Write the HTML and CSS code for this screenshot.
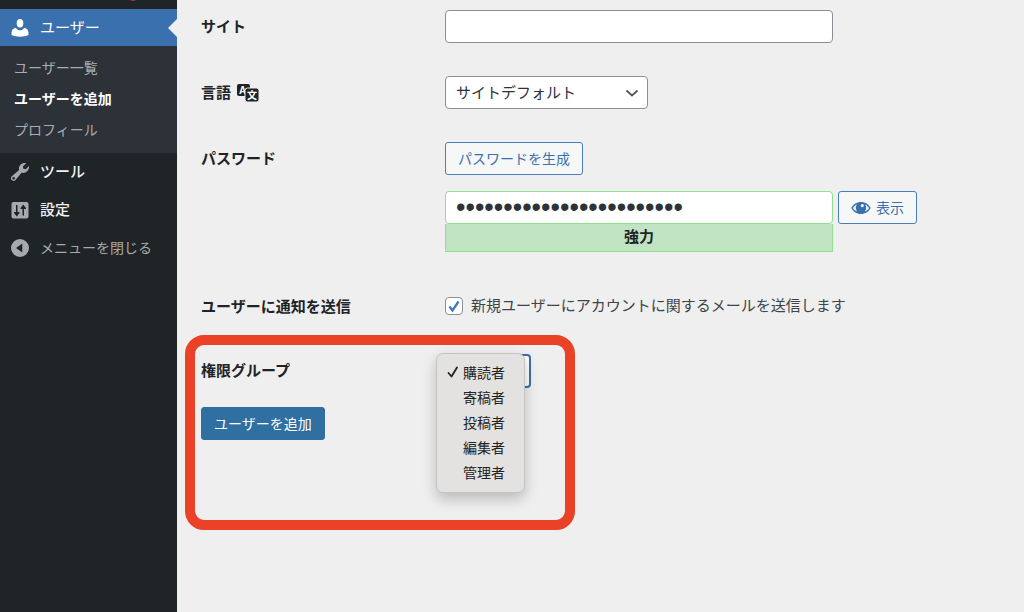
FILE: index.html
```html
<!DOCTYPE html>
<html lang="ja">
<head>
    <meta charset="UTF-8">
    <meta name="viewport" content="width=device-width, initial-scale=1.0">
    <title>ユーザーを追加</title>
    <link rel="stylesheet" href="styles.css">
</head>
<body>

<!-- Admin menu -->
<nav class="sidebar">
    <div class="menu-top"><span class="update-badge"></span></div>
    <a href="#" class="menu-item current">
        <svg class="icon" viewBox="0 0 20 20"><ellipse cx="10" cy="5.2" rx="3.300" ry="4.200"/><path d="M5.800 9.700c.9 1.700 2.400 2.600 4.200 2.600s3.300-.9 4.200-2.600c2.800.6 4.300 2.400 4.300 5.200v2.200c-2.400 1.200-5.200 1.700-8.500 1.700s-6.100-.5-8.500-1.700v-2.200c0-2.800 1.500-4.600 4.300-5.200z"/></svg>
        ユーザー
    </a>
    <ul class="submenu">
        <li><a href="#">ユーザー一覧</a></li>
        <li><a href="#" class="active">ユーザーを追加</a></li>
        <li><a href="#">プロフィール</a></li>
    </ul>
    <a href="#" class="menu-item">
        <svg class="icon" viewBox="0 0 20 20"><path fill-rule="evenodd" d="M17 9.300c-1.500 1.500-3.500 2-5.200 1.300l-6.300 7.400c-1.100 1.200-2.700 1.200-3.800.1s-1.100-2.700.1-3.800l7.400-6.300c-.7-1.800-.2-3.900 1.200-5.300C12.100 1 14.300.5 16.200 1.200L12.900 4.500l.5 2.300 2.300.5 3.300-3.300c.6 1.900-.6 3.900-2 5.300zM3.600 15a1.300 1.300 0 1 0 0 2.600 1.300 1.300 0 0 0 0-2.600z"/></svg>
        ツール
    </a>
    <a href="#" class="menu-item">
        <svg class="icon" viewBox="0 0 20 20"><path fill-rule="evenodd" d="M3.500 2h13q2 0 2 2v12.500q0 2-2 2h-13q-2 0-2-2V4q0-2 2-2zM6 5v7H4v1l2.800 3.500L9.500 13v-1h-2V5zM13.200 4.500 10.500 8v1h2v6.500H14V9h2V8z"/></svg>
        設定
    </a>
    <button type="button" class="menu-item collapse">
        <svg class="icon" viewBox="0 0 20 20"><path fill-rule="evenodd" d="M10 1a9 9 0 1 0 0 18A9 9 0 0 0 10 1zM12.300 5.500v9L6 10z"/></svg>
        メニューを閉じる
    </button>
</nav>

<main class="content">
    <form class="user-form">
        <div class="row">
            <label class="title" for="url">サイト</label>
            <input type="text" id="url" class="field wide">
        </div>

        <div class="row">
            <label class="title" for="locale">言語
                <svg class="translate" viewBox="0 0 23 20">
                    <rect x="1" y="1" width="13" height="12" rx="2"/>
                    <text x="3" y="11">A</text>
                    <rect class="front" x="9" y="5" width="14" height="14" rx="2.500"/>
                    <text x="11" y="16">文</text>
                </svg>
            </label>
            <select id="locale" class="field locale">
                <option>サイトデフォルト</option>
            </select>
        </div>

        <div class="row">
            <label class="title" for="pass">パスワード</label>
            <div class="password">
                <button type="button" class="button">パスワードを生成</button>
                <div class="password-line">
                    <div class="password-box">
                        <input type="password" id="pass" class="field strong" value="abcdefghijklmnopqrstuvwx">
                        <div class="strength">強力</div>
                    </div>
                    <button type="button" class="button">
                        <svg class="eye" viewBox="0 0 20 14"><path fill-rule="evenodd" d="M10 1C5.800 1 2.300 3.200.3 7c2 3.800 5.500 6 9.700 6s7.700-2.200 9.700-6C17.700 3.200 14.200 1 10 1zM6 3.500a5 5 0 0 0 .4 7C4.500 9.900 3 8.700 1.900 7 2.900 5.400 4.300 4.200 6 3.500zm8 0c1.700.7 3.100 1.900 4.100 3.500-1.100 1.700-2.600 2.900-4.500 3.500a5 5 0 0 0 .4-7zM11.300 3a1.600 1.600 0 1 1 0 3.200 1.600 1.600 0 0 1 0-3.200z"/></svg>
                        表示
                    </button>
                </div>
            </div>
        </div>

        <div class="row notify">
            <span class="title">ユーザーに通知を送信</span>
            <label class="check"><input type="checkbox" checked>新規ユーザーにアカウントに関するメールを送信します</label>
        </div>

        <!-- Role picker with its open menu -->
        <div class="role-area">
            <div class="row">
                <label class="title" for="role">権限グループ</label>
                <div class="role-box">
                    <select id="role" class="field role">
                        <option>購読者</option>
                    </select>
                    <ul class="role-menu">
                        <li class="selected">購読者</li>
                        <li>寄稿者</li>
                        <li>投稿者</li>
                        <li>編集者</li>
                        <li>管理者</li>
                    </ul>
                </div>
            </div>
            <button type="submit" class="button primary">ユーザーを追加</button>
            <div class="highlight"></div>
        </div>
    </form>
</main>

</body>
</html>
```
FILE: styles.css
```css
* {
    box-sizing: border-box;
}

body {
    display: flex;
    min-height: 100vh;
    margin: 0;
    background-color: #efefef;
    color: #3c434a;
    font-family: "Liberation Sans", "Noto Sans CJK JP", sans-serif;
    font-size: 15px;
    line-height: 24px;
}

button, input, select {
    font: inherit;
}

ul {
    list-style: none;
    margin: 0;
    padding: 0;
}

/* Sidebar */
.sidebar {
    flex: 0 0 177px;
    background-color: #1f2427;
}

.menu-top {
    display: flex;
    justify-content: center;
    align-items: flex-end;
    height: 9px;
    padding: 0 0 8px 88px;
}

.update-badge {
    flex: none;
    width: 8px;
    height: 8px;
    border-radius: 50%;
    background-color: #b03238;
}

.menu-item {
    display: flex;
    align-items: center;
    gap: 10px;
    width: 100%;
    height: 38px;
    padding: 0 10px;
    border: none;
    background: none;
    color: #f0f0f1;
    font-weight: 500;
    text-decoration: none;
}

.icon {
    width: 20px;
    height: 20px;
    fill: #a7aaad;
}

.menu-item.current {
    position: relative;
    height: 37px;
    background-color: #3a70ae;
    color: #fff;
    font-weight: 400;
}

.menu-item.current::after {
    content: "";
    position: absolute;
    top: 10px;
    right: 0;
    border: 9px solid transparent;
    border-left: none;
    border-right-color: #efefef;
}

.menu-item.current .icon {
    fill: #fff;
}

.submenu {
    padding: 7px 0;
    background-color: #2d3239;
    font-size: 14px;
}

.submenu a {
    display: block;
    padding: 3px 14px 4px;
    color: #a9acb0;
    text-decoration: none;
}

.submenu a.active {
    color: #fff;
    font-weight: bold;
}

.menu-item.collapse {
    color: #a7aaad;
    font-size: 14px;
    font-weight: 400;
    cursor: pointer;
}

/* Form */
.content {
    flex: 1;
    padding: 10px 24px;
}

.user-form {
    display: flex;
    flex-direction: column;
    gap: 33px;
}

.row {
    display: grid;
    grid-template-columns: 244px 1fr;
    align-items: start;
}

.title {
    display: flex;
    align-items: center;
    gap: 5px;
    padding: 5px 0 2px;
    color: #1d2327;
    font-weight: bold;
}

.translate {
    width: 23px;
    height: 20px;
    fill: #1d2327;
}

.translate .front {
    stroke: #efefef;
}

.translate text {
    fill: #fff;
    font-size: 10px;
    font-weight: bold;
}

.field {
    height: 33px;
    padding: 0 10px;
    border: 1px solid #8c8f94;
    border-radius: 4px;
    background-color: #fff;
    color: #2c3338;
}

.wide {
    width: 100%;
    max-width: 388px;
}

select.field {
    appearance: none;
    justify-self: start;
    background-image: url("data:image/svg+xml,%3Csvg xmlns='http://www.w3.org/2000/svg' viewBox='0 0 14 14'%3E%3Cpath d='M1.500 4.500l5.500 5 5.500-5' fill='none' stroke='%2350575e' stroke-width='1.800'/%3E%3C/svg%3E");
    background-position: right 8px center;
    background-repeat: no-repeat;
    background-size: 14px 14px;
}

.locale {
    width: 203px;
}

.button {
    display: inline-flex;
    align-items: center;
    gap: 5px;
    height: 33px;
    padding: 0 12px;
    border: 1px solid #4a7dc0;
    border-radius: 3px;
    background-color: #f6f7f7;
    color: #3a70ae;
    font-size: 14px;
    white-space: nowrap;
    cursor: pointer;
}

.button.primary {
    border-color: #2f6fa1;
    background-color: #2f6fa1;
    color: #fff;
}

.password {
    display: flex;
    flex-direction: column;
    align-items: flex-start;
    gap: 16px;
}

.password-line {
    display: flex;
    align-items: flex-start;
    gap: 5px;
    width: 100%;
}

.password-box {
    flex: 0 1 388px;
}

.strong {
    display: block;
    width: 100%;
    border-color: #8fe08f;
    font-size: 27px;
}

.strength {
    height: 28px;
    border: 1px solid #8fe08f;
    border-top: none;
    background-color: #c0e3c2;
    color: #1d2327;
    font-weight: bold;
    line-height: 26px;
    text-align: center;
}

.eye {
    width: 20px;
    height: 14px;
    fill: #3a70ae;
}

.notify {
    padding-top: 5px;
}

.check {
    display: flex;
    align-items: center;
    gap: 8px;
    padding: 4px 0 3px;
}

.check input {
    appearance: none;
    flex: none;
    width: 18px;
    height: 18px;
    margin: 0;
    border: 1px solid #8c8f94;
    border-radius: 4px;
    background: #fff url("data:image/svg+xml,%3Csvg xmlns='http://www.w3.org/2000/svg' viewBox='0 0 16 16'%3E%3Cpath d='M3.500 8.500l3 4 6-9' fill='none' stroke='%233b7cc4' stroke-width='2.300'/%3E%3C/svg%3E") center no-repeat;
}

/* Role area */
.role-area {
    position: relative;
    display: flex;
    flex-direction: column;
    align-items: flex-start;
    gap: 19px;
}

.role-box {
    position: relative;
}

.role {
    width: 86px;
    height: 34px;
    border: 2px solid #3a70ae;
}

.role-menu {
    position: absolute;
    z-index: 1;
    top: -1px;
    left: -9px;
    width: 89px;
    padding: 7px 0 6px 26px;
    border: 1px solid #c4c4c4;
    border-radius: 7px;
    background-color: #e3e2e0;
    box-shadow: 0 6px 14px rgba(0, 0, 0, 0.22);
    color: #222;
    font-size: 14px;
    line-height: 25px;
}

.role-menu .selected::before {
    content: "";
    display: inline-block;
    width: 12px;
    height: 12px;
    margin-left: -16px;
    margin-right: 4px;
    background: url("data:image/svg+xml,%3Csvg xmlns='http://www.w3.org/2000/svg' viewBox='0 0 12 12'%3E%3Cpath d='M1.500 7l3 3.500L10 1.500' fill='none' stroke='%23222' stroke-width='1.800' stroke-linecap='round' stroke-linejoin='round'/%3E%3C/svg%3E") center no-repeat;
}

.highlight {
    position: absolute;
    top: -19px;
    left: -16px;
    width: 390px;
    height: 195px;
    border: 10px solid #eb4127;
    border-radius: 19px;
    pointer-events: none;
}
```
